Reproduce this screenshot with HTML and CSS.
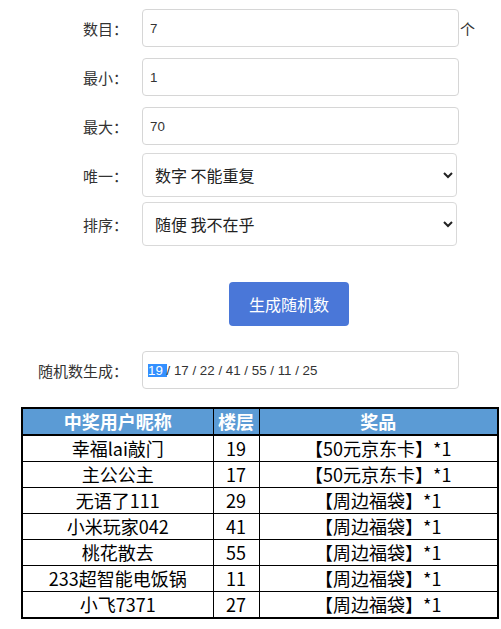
FILE: index.html
```html
<!DOCTYPE html>
<html lang="zh-CN">
<head>
<meta charset="utf-8">
<title>随机数生成</title>
<link rel="stylesheet" href="styles.css">
</head>
<body>
<div class="form">
  <div class="row r-count">
    <label class="lbl">数目：</label>
    <input class="ctl" type="text" value="7">
    <span class="unit">个</span>
  </div>
  <div class="row r-min">
    <label class="lbl">最小：</label>
    <input class="ctl" type="text" value="1">
  </div>
  <div class="row r-max">
    <label class="lbl">最大：</label>
    <input class="ctl" type="text" value="70">
  </div>
  <div class="row r-uniq">
    <label class="lbl">唯一：</label>
    <select class="sel"><option>数字 不能重复</option></select>
  </div>
  <div class="row r-sort">
    <label class="lbl">排序：</label>
    <select class="sel"><option>随便 我不在乎</option></select>
  </div>
  <div class="row r-btn">
    <span class="lbl"></span>
    <button class="btn" type="button">生成随机数</button>
  </div>
  <div class="row r-out">
    <label class="lbl">随机数生成：</label>
    <div class="out"><span class="hl">19</span>/ 17 / 22 / 41 / 55 / 11 / 25</div>
  </div>
</div>
<table class="prize">
  <colgroup><col class="c1"><col class="c2"><col class="c3"></colgroup>
  <thead>
    <tr><th>中奖用户昵称</th><th>楼层</th><th>奖品</th></tr>
  </thead>
  <tbody>
    <tr><td>幸福lai敲门</td><td>19</td><td>【50元京东卡】*1</td></tr>
    <tr><td>主公公主</td><td>17</td><td>【50元京东卡】*1</td></tr>
    <tr><td>无语了111</td><td>29</td><td>【周边福袋】*1</td></tr>
    <tr><td>小米玩家042</td><td>41</td><td>【周边福袋】*1</td></tr>
    <tr><td>桃花散去</td><td>55</td><td>【周边福袋】*1</td></tr>
    <tr><td>233超智能电饭锅</td><td>11</td><td>【周边福袋】*1</td></tr>
    <tr class="last"><td>小飞7371</td><td>27</td><td>【周边福袋】*1</td></tr>
  </tbody>
</table>
</body>
</html>
```
FILE: styles.css
```css
html, body {
  margin: 0;
  padding: 0;
  background: #fff;
}
body {
  font-family: "Noto Sans CJK SC", "Liberation Sans", sans-serif;
  color: #333;
}
.form {
  padding-top: 9px;
  display: flex;
  flex-direction: column;
}
.row {
  display: grid;
  grid-template-columns: 128px 317px auto;
  column-gap: 14px;
  align-items: center;
}
.r-count, .r-min { margin-bottom: 11px; }
.r-max { margin-bottom: 8px; }
.r-uniq { margin-bottom: 5px; }
.r-sort { margin-bottom: 36px; }
.r-btn { margin-bottom: 25px; }
.r-out { margin-bottom: 18px; }

.lbl {
  text-align: right;
  font-size: 15px;
  color: #333;
  white-space: nowrap;
}
.ctl {
  box-sizing: border-box;
  width: 317px;
  height: 38px;
  margin: 0;
  border: 1px solid #d6d6d6;
  border-radius: 4px;
  padding: 0 7px;
  font-family: "Liberation Sans", Arial, sans-serif;
  font-size: 13.333px;
  color: #333;
  background: #fff;
  outline: none;
}
.unit {
  margin-left: -13px;
  font-size: 15px;
  color: #333;
}
.sel {
  box-sizing: border-box;
  width: 315px;
  height: 44px;
  margin: 0;
  border: 1px solid #d9d9d9;
  border-radius: 4px;
  padding: 0 6px 0 8px;
  font-family: "Noto Sans CJK SC", sans-serif;
  font-size: 16px;
  color: #222;
  background-color: #fff;
}
.btn {
  justify-self: start;
  margin-left: 87px;
  width: 120px;
  height: 44px;
  border: none;
  border-radius: 4px;
  background: #4a77d8;
  color: #fff;
  font-family: "Noto Sans CJK SC", sans-serif;
  font-size: 16px;
  padding: 0;
}
.out {
  box-sizing: border-box;
  width: 317px;
  height: 38px;
  border: 1px solid #d6d6d6;
  border-radius: 4px;
  padding: 0 5px;
  display: flex;
  align-items: center;
  white-space: pre;
  font-family: "Liberation Sans", Arial, sans-serif;
  font-size: 13.333px;
  color: #333;
}
.hl {
  display: inline-block;
  height: 13px;
  line-height: 13px;
  padding-right: 3.7px;
  background: #3390ff;
  color: #fff;
}

.prize {
  margin-left: 21px;
  width: 476px;
  table-layout: fixed;
  border-collapse: collapse;
  border: 2px solid #000;
  font-family: "Noto Sans CJK SC", sans-serif;
  font-size: 18px;
  color: #000;
}
.c1 { width: 191px; }
.c2 { width: 46px; }
.c3 { width: 239px; }
.prize th, .prize td {
  padding: 0;
  height: 25px;
  line-height: 25px;
  text-align: center;
  border: 1px solid #000;
  white-space: nowrap;
}
.prize th {
  background: #5b9bd5;
  color: #fff;
  font-weight: bold;
  border-bottom: 2px solid #000;
}
.prize tr.last td {
  border-bottom: 2px solid #000;
}
```
